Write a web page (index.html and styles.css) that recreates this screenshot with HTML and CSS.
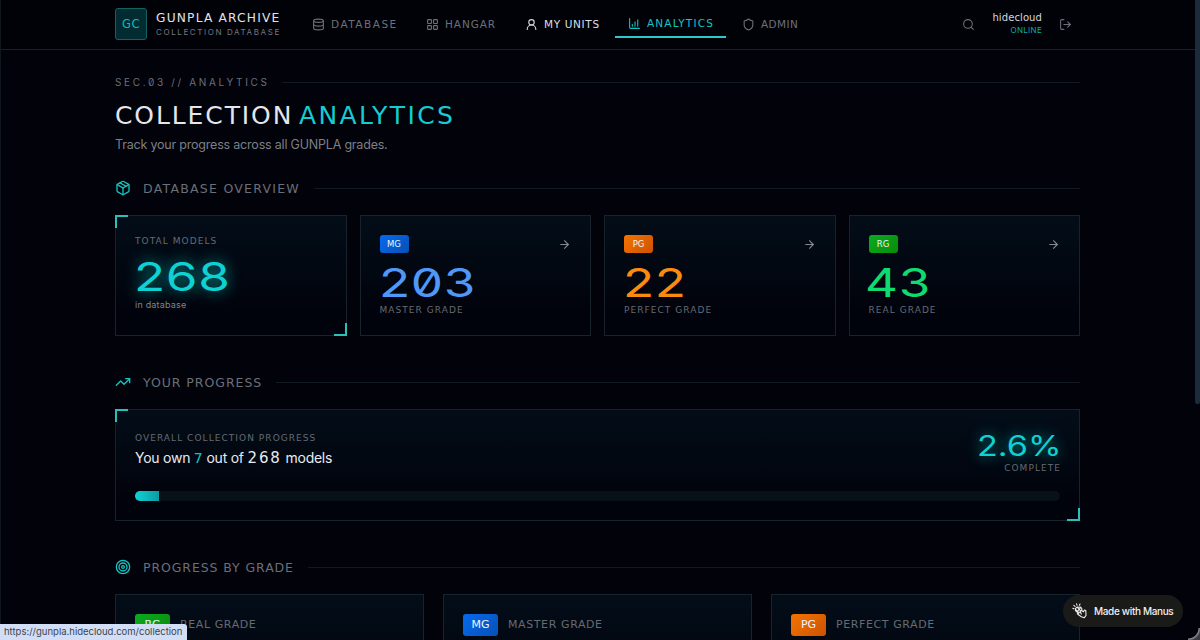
FILE: index.html
```html
<!DOCTYPE html>
<html lang="en">
<head>
    <meta charset="UTF-8">
    <meta name="viewport" content="width=device-width, initial-scale=1.0">
    <title>Analytics - Gunpla Archive</title>
    <link rel="stylesheet" href="styles.css">
</head>
<body>
    <header class="header">
        <div class="container header-row">
            <div class="logo">GC</div>
            <div class="brand">
                <span class="brand-name">GUNPLA ARCHIVE</span>
                <span class="brand-sub">COLLECTION DATABASE</span>
            </div>
            <nav class="nav">
                <a class="nav-link nav-database">
                    <svg class="icon" viewBox="0 0 24 24"><ellipse cx="12" cy="5" rx="9" ry="3"/><path d="M3 5v14a9 3 0 0 0 18 0V5"/><path d="M3 12a9 3 0 0 0 18 0"/></svg>
                    <span>DATABASE</span>
                </a>
                <a class="nav-link nav-hangar">
                    <svg class="icon" viewBox="0 0 24 24"><rect x="3" y="3" width="7" height="7" rx="1"/><rect x="14" y="3" width="7" height="7" rx="1"/><rect x="14" y="14" width="7" height="7" rx="1"/><rect x="3" y="14" width="7" height="7" rx="1"/></svg>
                    <span>HANGAR</span>
                </a>
                <a class="nav-link nav-units">
                    <svg class="icon" viewBox="0 0 24 24"><circle cx="12" cy="8" r="5"/><path d="M20 21a8 8 0 0 0-16 0"/></svg>
                    <span>MY UNITS</span>
                </a>
                <a class="nav-link nav-analytics">
                    <svg class="icon" viewBox="0 0 24 24"><path d="M3 3v16a2 2 0 0 0 2 2h16"/><path d="M13 17V9"/><path d="M18 17V5"/><path d="M8 17v-3"/></svg>
                    <span>ANALYTICS</span>
                </a>
                <a class="nav-link nav-admin">
                    <svg class="icon" viewBox="0 0 24 24"><path d="M20 13c0 5-3.5 7.5-7.66 8.95a1 1 0 0 1-.67-.01C7.5 20.5 4 18 4 13V6a1 1 0 0 1 1-1c2 0 4.5-1.2 6.24-2.72a1.17 1.17 0 0 1 1.52 0C14.51 3.81 17 5 19 5a1 1 0 0 1 1 1z"/></svg>
                    <span>ADMIN</span>
                </a>
            </nav>
            <div class="account">
                <svg class="icon" viewBox="0 0 24 24"><circle cx="11" cy="11" r="8"/><path d="m21 21-4.3-4.3"/></svg>
                <div class="user">
                    <span class="user-name">hidecloud</span>
                    <span class="user-status">ONLINE</span>
                </div>
                <svg class="icon" viewBox="0 0 24 24"><path d="M9 21H5a2 2 0 0 1-2-2V5a2 2 0 0 1 2-2h4"/><path d="m16 17 5-5-5-5"/><path d="M21 12H9"/></svg>
            </div>
        </div>
    </header>

    <main class="container">
        <div class="sec-label"><span>SEC.03 // ANALYTICS</span></div>
        <h1 class="page-title"><span class="title-main">COLLECTION</span><span class="title-accent">ANALYTICS</span></h1>
        <p class="intro">Track your progress across all GUNPLA grades.</p>

        <h2 class="section-title">
            <svg class="icon" viewBox="0 0 24 24"><path d="M11 21.73a2 2 0 0 0 2 0l7-4A2 2 0 0 0 21 16V8a2 2 0 0 0-1-1.73l-7-4a2 2 0 0 0-2 0l-7 4A2 2 0 0 0 3 8v8a2 2 0 0 0 1 1.73z"/><path d="M12 22V12"/><path d="m3.3 7 8.7 5 8.7-5"/><path d="m7.5 4.27 9 5.15"/></svg>
            <span class="t-overview">DATABASE OVERVIEW</span>
        </h2>
        <div class="stats">
            <div class="panel bracket stat">
                <span class="label">TOTAL MODELS</span>
                <span class="number number-total">268</span>
                <span class="note">in database</span>
            </div>
            <div class="panel stat">
                <div class="stat-top">
                    <span class="badge mg">MG</span>
                    <svg class="icon arrow" viewBox="0 0 24 24"><path d="M5 12h14"/><path d="m12 5 7 7-7 7"/></svg>
                </div>
                <span class="number number-mg">203</span>
                <span class="label">MASTER GRADE</span>
            </div>
            <div class="panel stat">
                <div class="stat-top">
                    <span class="badge pg">PG</span>
                    <svg class="icon arrow" viewBox="0 0 24 24"><path d="M5 12h14"/><path d="m12 5 7 7-7 7"/></svg>
                </div>
                <span class="number number-pg">22</span>
                <span class="label">PERFECT GRADE</span>
            </div>
            <div class="panel stat">
                <div class="stat-top">
                    <span class="badge rg">RG</span>
                    <svg class="icon arrow" viewBox="0 0 24 24"><path d="M5 12h14"/><path d="m12 5 7 7-7 7"/></svg>
                </div>
                <span class="number number-rg">43</span>
                <span class="label">REAL GRADE</span>
            </div>
        </div>

        <h2 class="section-title">
            <svg class="icon" viewBox="0 0 24 24"><path d="M16 7h6v6"/><path d="m22 7-8.5 8.5-5-5L2 17"/></svg>
            <span class="t-progress">YOUR PROGRESS</span>
        </h2>
        <div class="panel bracket overall">
            <div class="overall-row">
                <div class="overall-text">
                    <span class="label">OVERALL COLLECTION PROGRESS</span>
                    <p class="owned">You own <span class="own">7</span> out of <span class="total">268</span> models</p>
                </div>
                <div class="overall-percent">
                    <span class="percent">2.6%</span>
                    <span class="label">COMPLETE</span>
                </div>
            </div>
            <div class="bar"><div class="bar-fill" style="width: 2.6%"></div></div>
        </div>

        <h2 class="section-title">
            <svg class="icon" viewBox="0 0 24 24"><circle cx="12" cy="12" r="10"/><circle cx="12" cy="12" r="6"/><circle cx="12" cy="12" r="2"/></svg>
            <span class="t-grade">PROGRESS BY GRADE</span>
        </h2>
        <div class="grades">
            <div class="panel grade"><span class="badge badge-lg rg">RG</span><span class="grade-name">REAL GRADE</span></div>
            <div class="panel grade"><span class="badge badge-lg mg">MG</span><span class="grade-name">MASTER GRADE</span></div>
            <div class="panel grade"><span class="badge badge-lg pg">PG</span><span class="grade-name">PERFECT GRADE</span></div>
        </div>
    </main>

    <div class="scrollbar"></div>
    <div class="window-corner"></div>
    <div class="link-status">https://gunpla.hidecloud.com/collection</div>
    <div class="made-with">
        <svg viewBox="0 0 16 16"><path d="M3.6 5.4 5.2 4l1.6.3L8.3 4l1.4 1.4.2 2.4 1.6 1 .9-1.8 1.4.5.2 5-1.7 2.2-3-1L5.5 11l-.2-1.8-1.9-1.6z"/><path d="m5.6 4.6 3 3.2M4.2 7l2.5 2.6M8.4 5 5.2 8.6M9.6 7.4l-3.2 3M8.4 9.4l1 1.6M3 3.4l-1.2-1M5 2.2 4.6.9M7.4 2.2 8 1M2 5.6.9 5.4"/></svg>
        <span>Made with Manus</span>
    </div>
</body>
</html>
```
FILE: styles.css
```css
* {
    box-sizing: border-box;
}

body {
    margin: 0;
    height: 640px;
    overflow: hidden;
    background: #01020a;
    border-left: 1px solid #10161e;
    font-family: "Inter", "Liberation Sans", sans-serif;
    color: #e8eaf0;
}

.container {
    width: 965px;
    margin-left: 114px;
}

.icon {
    width: 13px;
    height: 13px;
    flex: none;
    fill: none;
    stroke: currentColor;
    stroke-width: 2;
    stroke-linecap: round;
    stroke-linejoin: round;
}

/* Header */
.header {
    height: 50px;
    border-bottom: 1px solid #17212b;
    background: #010208;
}

.header-row {
    height: 48px;
    display: flex;
    align-items: center;
}

.logo,
.brand-name,
.nav,
.user-name,
.sec-label,
.page-title,
.section-title,
.label,
.badge,
.grade-name {
    font-family: "DejaVu Sans", sans-serif;
    font-weight: 400;
    white-space: nowrap;
}

.logo {
    width: 32px;
    height: 32px;
    border: 1px solid #126361;
    border-radius: 3px;
    background: #032b32;
    color: #0bbcb9;
    font-size: 11.5px;
    line-height: 30px;
    text-align: center;
    letter-spacing: 0.5px;
}

.brand {
    width: 157px;
    padding-left: 9px;
    display: flex;
    flex-direction: column;
}

.brand-name {
    font-size: 12.2px;
    line-height: 15px;
    letter-spacing: 1.2px;
    color: #e0e2e6;
}

.brand-sub {
    font-size: 8px;
    line-height: 12px;
    letter-spacing: 1.6px;
    white-space: nowrap;
    color: #757981;
}

.nav {
    height: 48px;
    display: flex;
    align-items: center;
    font-size: 10.5px;
    color: #6c7079;
}

.nav-link {
    height: 28px;
    display: flex;
    align-items: center;
    gap: 6px;
    padding-left: 13px;
}

.nav-database {
    width: 106px;
    margin-left: -5px;
    letter-spacing: 1.5px;
}

.nav-hangar {
    width: 99px;
    margin-left: 8px;
    letter-spacing: 0.9px;
}

.nav-units {
    width: 103px;
    color: #dcdee2;
    letter-spacing: 0.65px;
}

.nav-analytics {
    width: 111px;
    border-bottom: 2px solid #2cc9c9;
    color: #12c4c4;
    letter-spacing: 1.15px;
}

.nav-admin {
    letter-spacing: 0.4px;
    padding-left: 16px;
}

.account {
    margin-left: auto;
    margin-right: 8px;
    display: flex;
    align-items: center;
    gap: 17px;
    color: #6c7079;
}

.user {
    display: flex;
    flex-direction: column;
    align-items: flex-end;
}

.user-name {
    font-size: 10px;
    line-height: 12px;
    letter-spacing: 0.1px;
    color: #d5d7db;
}

.user-status {
    font-size: 8px;
    line-height: 12px;
    letter-spacing: 0.3px;
    color: #0fadac;
}

/* Page heading */
.sec-label,
.section-title {
    display: flex;
    align-items: center;
    color: #6b6f77;
}

.sec-label::after,
.section-title::after {
    content: "";
    flex: 1;
    height: 1px;
    margin-left: 13px;
    background: #121a21;
}

.sec-label {
    margin-top: 25px;
    height: 14px;
    font-family: "Inter", sans-serif;
    font-feature-settings: "zero" 1;
    font-size: 10px;
}

.sec-label span {
    width: 154px;
    letter-spacing: 2.65px;
}

.page-title {
    display: flex;
    gap: 7px;
    margin: 10px 0 0;
    height: 34px;
    font-size: 25px;
    line-height: 34px;
    color: #e4e6ec;
}

.title-main {
    width: 177px;
    letter-spacing: 1.9px;
}

.title-accent {
    color: #14cdd2;
    letter-spacing: 2.4px;
}

.intro {
    margin: 2px 0 0;
    font-size: 12.5px;
    line-height: 20px;
    letter-spacing: -0.2px;
    color: #7c8087;
}

.section-title {
    height: 20px;
    margin: 23px 0 0;
    font-size: 12.5px;
}

.section-title .icon {
    width: 16px;
    height: 16px;
    margin-right: 12px;
    color: #14c4c2;
}

.t-overview {
    width: 158px;
    letter-spacing: 1.25px;
}

.t-progress {
    width: 120px;
    letter-spacing: 0.95px;
}

.t-grade {
    width: 152px;
    letter-spacing: 0.9px;
}

/* Panels */
.panel {
    position: relative;
    border: 1px solid #18222d;
    background: linear-gradient(#030d18, #01030c 80%);
}

.bracket::before,
.bracket::after {
    content: "";
    position: absolute;
    width: 11px;
    height: 11px;
    border: 0 solid #2bbfb9;
}

.bracket::before {
    top: -1px;
    left: -1px;
    border-width: 2px 0 0 2px;
}

.bracket::after {
    right: -1px;
    bottom: -1px;
    border-width: 0 2px 2px 0;
}

.label {
    font-size: 9px;
    line-height: 12px;
    letter-spacing: 1.05px;
    color: #656a73;
}

.stats {
    display: grid;
    grid-template-columns: repeat(4, 1fr);
    gap: 13px;
    margin: 17px 0 36px;
}

.stat {
    height: 121px;
    padding: 19px;
    display: flex;
    flex-direction: column;
    align-items: flex-start;
}

.stat-top {
    width: 100%;
    height: 18px;
    display: flex;
    align-items: center;
    justify-content: space-between;
}

.arrow {
    color: #858b94;
}

.badge {
    width: 29px;
    height: 18px;
    border-radius: 3px;
    color: #f0f4f8;
    font-size: 8.5px;
    line-height: 18px;
    text-align: center;
}

.mg {
    background: linear-gradient(135deg, #076aee, #0650b5);
}

.pg {
    background: linear-gradient(135deg, #f47400, #cc5200);
}

.rg {
    background: linear-gradient(135deg, #0caa1e, #078c0b);
}

.number {
    height: 39px;
    margin: 10px 0 2px -1px;
    font-size: 40px;
    font-weight: 400;
    line-height: 39px;
    letter-spacing: 0.5px;
    font-feature-settings: "zero" 1;
    transform: scaleX(1.28);
    transform-origin: left;
}

.number-total {
    margin-top: 10px;
    margin-bottom: 0;
    color: #0fd0d2;
    text-shadow: 0 0 13px rgba(0, 210, 205, 0.75);
}

.number-mg {
    color: #4f98f8;
}

.number-pg {
    color: #fb8b10;
}

.number-rg {
    margin-left: -4px;
    color: #10db70;
}

.note {
    margin-top: 2px;
    font-size: 9px;
    line-height: 14px;
    letter-spacing: 0.2px;
    color: #80848b;
}

/* Overall progress */
.overall {
    height: 112px;
    margin: 17px 0 36px;
    padding: 20px 19px;
}

.overall-row {
    display: flex;
    justify-content: space-between;
}

.overall-text {
    padding-top: 2px;
}

.overall-text .label {
    display: block;
}

.owned {
    margin: 4px 0 0;
    font-size: 14px;
    line-height: 20px;
    letter-spacing: -0.25px;
    white-space: nowrap;
}

.own,
.total {
    font-family: "DejaVu Sans", sans-serif;
}

.own {
    color: #0fc4c4;
    letter-spacing: 0;
}

.total {
    font-size: 15px;
    line-height: 1;
    letter-spacing: 1.9px;
}

.overall-percent {
    display: flex;
    flex-direction: column;
    align-items: flex-end;
}

.overall-percent .label {
    margin-right: -1px;
}

.percent {
    margin-right: -2px;
    font-size: 28.5px;
    line-height: 32px;
    color: #0fd0d2;
    text-shadow: 0 0 13px rgba(0, 210, 205, 0.7);
    transform: scaleX(1.2);
    transform-origin: right;
}

.bar {
    height: 10px;
    margin-top: 17px;
    border-radius: 5px;
    overflow: hidden;
    background: #061118;
}

.bar-fill {
    height: 10px;
    background: linear-gradient(90deg, #0fd3d6, #0b9da2);
}

/* Grades */
.grades {
    display: grid;
    grid-template-columns: repeat(3, 1fr);
    gap: 19px;
    margin-top: 17px;
}

.grade {
    height: 140px;
    padding: 19px;
    display: flex;
    gap: 10px;
    border-color: #15242d;
}

.badge-lg {
    width: 35px;
    height: 22px;
    font-size: 11px;
    line-height: 22px;
}

.grade-name {
    font-size: 11px;
    line-height: 22px;
    letter-spacing: 0.6px;
    color: #656a73;
}

/* Overlays */
.scrollbar {
    position: absolute;
    top: 0;
    right: 0;
    width: 5px;
    height: 404px;
    border-radius: 0 0 2px 2px;
    background: #1b2b3c;
}

.window-corner {
    position: absolute;
    right: 0;
    bottom: 0;
    width: 12px;
    height: 12px;
    background: radial-gradient(circle at 0 0, transparent 10px, #8b8f94 11px, #3a3c40 13px);
}

.link-status {
    position: absolute;
    left: 0;
    bottom: 0;
    width: 187px;
    height: 16px;
    padding-left: 4px;
    border-radius: 0 3px 0 0;
    background: #d2def5;
    color: #3b4350;
    font-size: 9.5px;
    line-height: 16px;
    white-space: nowrap;
}

.made-with {
    position: absolute;
    left: 1063px;
    top: 595px;
    width: 120px;
    height: 32px;
    display: flex;
    align-items: center;
    gap: 6px;
    padding-left: 9px;
    border-radius: 16px;
    background: #1a1a19;
    color: #f0f0f0;
    font-size: 10px;
    font-weight: 500;
    letter-spacing: -0.35px;
    white-space: nowrap;
}

.made-with svg {
    width: 16px;
    height: 16px;
    fill: none;
    stroke: #f0f0f0;
    stroke-width: 1.1;
    stroke-linecap: round;
    stroke-linejoin: round;
}
```
